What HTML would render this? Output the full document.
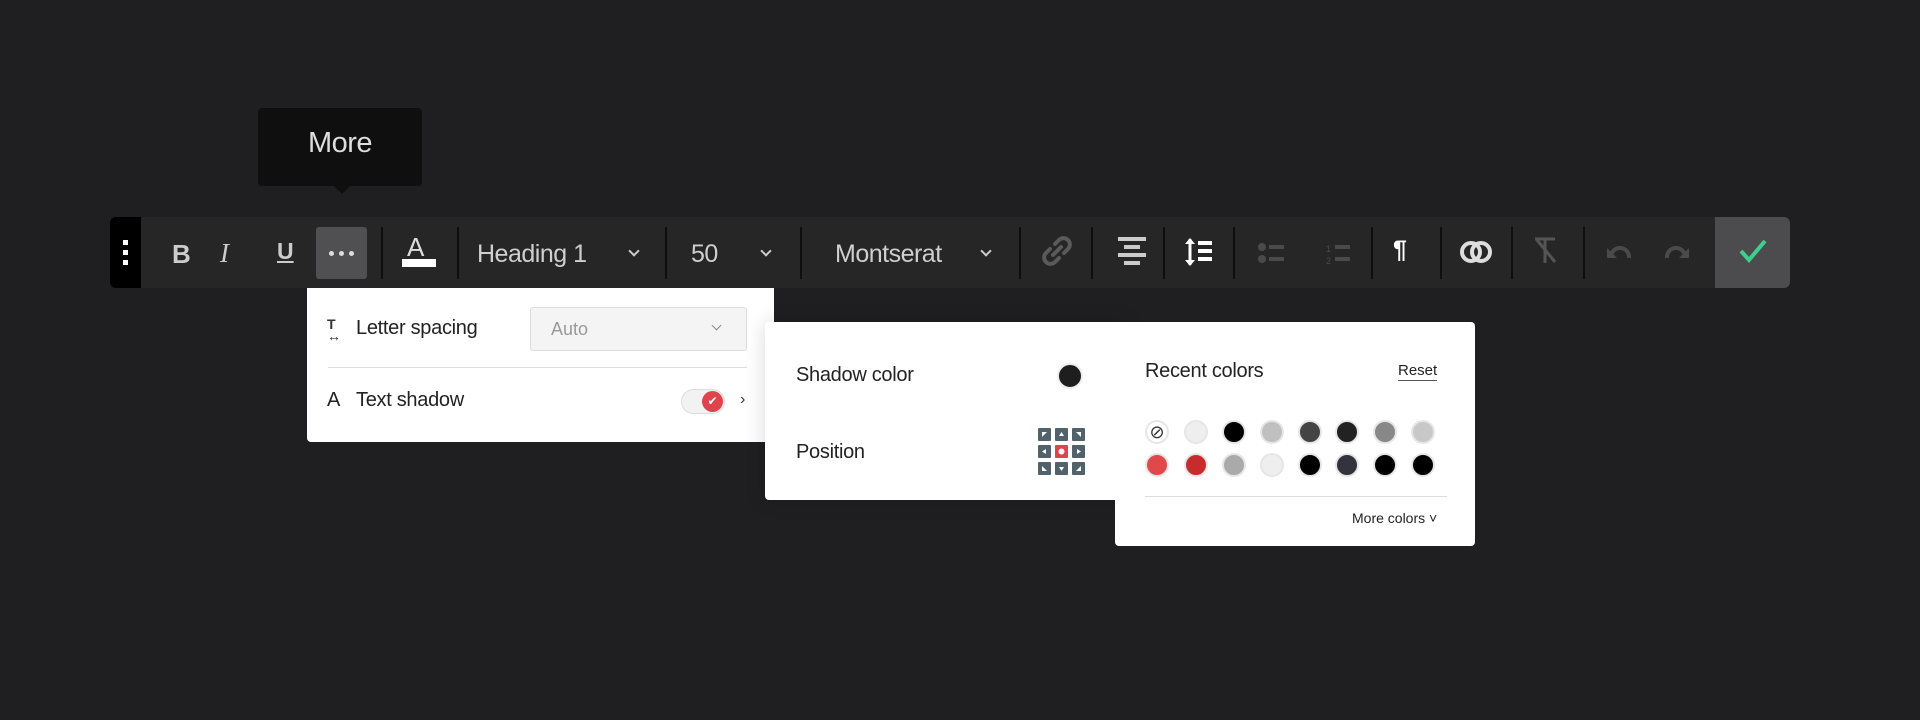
<!DOCTYPE html>
<html><head><meta charset="utf-8"><style>
*{box-sizing:border-box;margin:0;padding:0}
body{width:1920px;height:720px;background:#1f1f21;position:relative;overflow:hidden;font-family:"Liberation Sans",sans-serif}
.a{position:absolute}
.tb{left:110px;top:217px;width:1680px;height:71px;background:#262627;border-radius:6px}
.sep{position:absolute;top:227px;width:2px;height:52px;background:#0e0e0f}
.t{color:#cfcfcf;font-size:25px;letter-spacing:-0.5px}
.chev{position:absolute;width:8px;height:8px;border-right:2px solid #ccc;border-bottom:2px solid #ccc;transform:rotate(45deg)}
.panel{background:#fff;border-radius:4px}
.lbl{color:#222;font-size:20px;letter-spacing:-0.3px}
.sw{position:absolute;width:24px;height:24px;border-radius:50%;border:2px solid #e6e6e6}
</style></head><body>
<div class="a" style="left:258px;top:108px;width:164px;height:78px;background:#0f0f10;border-radius:4px"></div>
<div class="a" style="left:330px;top:182px;width:0;height:0;border-left:12px solid transparent;border-right:12px solid transparent;border-top:12px solid #0f0f10"></div>
<div class="a" style="left:258px;top:127px;width:164px;text-align:center;color:#ddd;font-size:29px;letter-spacing:-0.5px">More</div>
<div class="a tb"></div>
<div class="a" style="left:110px;top:217px;width:31px;height:71px;background:#000;border-radius:6px 0 0 6px"></div>
<div class="a" style="left:123px;top:240px;width:5px;height:5px;background:#fff;box-shadow:0 10px #fff,0 20px #fff"></div>
<div class="a" style="left:172px;top:239px;color:#ccc;font-size:26px;font-weight:bold">B</div>
<div class="a" style="left:220px;top:238px;color:#ccc;font-size:27px;font-style:italic;font-family:'Liberation Serif',serif">I</div>
<div class="a" style="left:277px;top:238px;color:#ccc;font-size:23px;font-weight:bold;text-decoration:underline">U</div>
<div class="a" style="left:316px;top:227px;width:51px;height:52px;background:#505053;border-radius:3px"></div>
<div class="a" style="left:329px;top:251px;width:5px;height:5px;border-radius:50%;background:#ddd;box-shadow:10px 0 #ddd,20px 0 #ddd"></div>
<div class="sep" style="left:381px"></div><div class="sep" style="left:457px"></div><div class="sep" style="left:665px"></div><div class="sep" style="left:800px"></div><div class="sep" style="left:1019px"></div><div class="sep" style="left:1091px"></div><div class="sep" style="left:1163px"></div><div class="sep" style="left:1233px"></div><div class="sep" style="left:1371px"></div><div class="sep" style="left:1440px"></div><div class="sep" style="left:1511px"></div><div class="sep" style="left:1583px"></div>
<div class="a" style="left:407px;top:232px;color:#ddd;font-size:26px">A</div>
<div class="a" style="left:402px;top:259px;width:34px;height:8px;background:#fff"></div>
<div class="a t" style="left:477px;top:240px">Heading 1</div><div class="chev" style="left:630px;top:247px"></div>
<div class="a t" style="left:691px;top:240px">50</div><div class="chev" style="left:762px;top:247px"></div>
<div class="a t" style="left:835px;top:240px">Montserat</div><div class="chev" style="left:982px;top:247px"></div>
<svg class="a" style="left:1040px;top:234px" width="34" height="34" viewBox="0 0 34 34" fill="none" stroke="#5a5a5a" stroke-width="4" stroke-linecap="round"><path d="M15 10l4-4a6 6 0 0 1 9 9l-4 4M19 24l-4 4a6 6 0 0 1-9-9l4-4M13 21l8-8"/></svg>
<svg class="a" style="left:1118px;top:237px" width="30" height="30" fill="#ccc"><rect x="0" y="0" width="28" height="4"/><rect x="6" y="8" width="16" height="4"/><rect x="0" y="16" width="28" height="4"/><rect x="6" y="24" width="16" height="4"/></svg>
<svg class="a" style="left:1185px;top:237px" width="30" height="32" fill="#fff" stroke="#fff"><path d="M5 2v26" stroke-width="3"/><path d="M0 7l5-6 5 6zM0 23l5 6 5-6z" stroke="none"/><rect x="13" y="4" width="14" height="4" stroke="none"/><rect x="13" y="12" width="14" height="4" stroke="none"/><rect x="13" y="20" width="14" height="4" stroke="none"/></svg>
<svg class="a" style="left:1258px;top:242px" width="30" height="24" fill="#4a4a4a"><circle cx="4" cy="5" r="4"/><circle cx="4" cy="17" r="4"/><rect x="11" y="3" width="15" height="4"/><rect x="11" y="15" width="15" height="4"/></svg>
<svg class="a" style="left:1325px;top:242px" width="30" height="24" fill="#4a4a4a"><text x="1" y="10" font-size="9" font-family="Liberation Sans">1</text><text x="1" y="22" font-size="9" font-family="Liberation Sans">2</text><rect x="10" y="3" width="15" height="4"/><rect x="10" y="15" width="15" height="4"/></svg>
<div class="a" style="left:1393px;top:236px;color:#fff;font-size:25px;font-weight:bold">¶</div>
<svg class="a" style="left:1460px;top:238px" width="34" height="28" fill="none" stroke="#ddd" stroke-width="4"><circle cx="11" cy="14" r="9"/><circle cx="21" cy="14" r="9"/></svg>
<svg class="a" style="left:1532px;top:236px" width="28" height="30" fill="none" stroke="#555" stroke-width="3"><path d="M3 3h20M13 3v24M5 4l18 22"/></svg>
<svg class="a" style="left:1606px;top:242px" width="28" height="20" fill="none" stroke="#4a4a4a" stroke-width="4"><path d="M5 14a9 9 0 0 1 18 2"/><path d="M1 6v10h10z" fill="#4a4a4a" stroke="none"/></svg>
<svg class="a" style="left:1662px;top:242px" width="28" height="20" fill="none" stroke="#4a4a4a" stroke-width="4"><path d="M23 14a9 9 0 0 0-18 2"/><path d="M27 6v10h-10z" fill="#4a4a4a" stroke="none"/></svg>
<div class="a" style="left:1715px;top:217px;width:75px;height:71px;background:#4c4c4e;border-radius:0 6px 6px 0"></div>
<svg class="a" style="left:1738px;top:238px" width="30" height="26" fill="none" stroke="#3ecf8e" stroke-width="4"><path d="M3 13l8 9L27 3"/></svg>
<div class="a panel" style="left:307px;top:288px;width:467px;height:154px;border-radius:0 0 4px 4px"></div>
<div class="a" style="left:327px;top:318px;font-size:14px;color:#333;font-weight:bold;line-height:12px">T<br>↔</div>
<div class="a lbl" style="left:356px;top:317px">Letter spacing</div>
<div class="a" style="left:530px;top:307px;width:217px;height:44px;background:#f4f4f4;border:1px solid #ddd;border-radius:3px"></div>
<div class="a" style="left:551px;top:319px;color:#999;font-size:18px">Auto</div>
<div class="chev" style="left:713px;top:322px;width:7px;height:7px;border-color:#888;border-width:1.5px"></div>
<div class="a" style="left:328px;top:367px;width:419px;height:1px;background:#ddd"></div>
<div class="a lbl" style="left:327px;top:389px">A</div>
<div class="a lbl" style="left:356px;top:389px">Text shadow</div>
<div class="a" style="left:681px;top:389px;width:44px;height:25px;border-radius:13px;background:#f2f2f2;border:1px solid #ddd"></div>
<div class="a" style="left:702px;top:391px;width:21px;height:21px;border-radius:50%;background:#e0434c;color:#fff;font-size:12px;text-align:center;line-height:21px">✔</div>
<div class="a" style="left:740px;top:391px;color:#333;font-size:16px">›</div>
<div class="a panel" style="left:765px;top:322px;width:360px;height:178px;box-shadow:0 0 20px rgba(0,0,0,.15)"></div>
<div class="a lbl" style="left:796px;top:364px">Shadow color</div>
<div class="a" style="left:1057px;top:363px;width:26px;height:26px;border-radius:50%;background:#1e1e1e;border:2px solid #eee"></div>
<div class="a lbl" style="left:796px;top:441px">Position</div>
<svg class="a" style="left:1038px;top:428px" width="50" height="50"><g fill="#52626b"><rect x="0" y="0" width="13" height="13" rx="1"/><rect x="17" y="0" width="13" height="13" rx="1"/><rect x="34" y="0" width="13" height="13" rx="1"/><rect x="0" y="17" width="13" height="13" rx="1"/><rect x="34" y="17" width="13" height="13" rx="1"/><rect x="0" y="34" width="13" height="13" rx="1"/><rect x="17" y="34" width="13" height="13" rx="1"/><rect x="34" y="34" width="13" height="13" rx="1"/></g><rect x="17" y="17" width="13" height="13" rx="1" fill="#e0434c"/><circle cx="23.5" cy="23.5" r="3" fill="#fff"/><g fill="#fff"><path d="M4 9V4h5z"/><path d="M21 8l2.5-4 2.5 4z"/><path d="M43 9V4h-5z"/><path d="M8 21l-4 2.5 4 2.5z"/><path d="M39 21l4 2.5-4 2.5z"/><path d="M4 38v5h5z"/><path d="M21 39l2.5 4 2.5-4z"/><path d="M43 38v5h-5z"/></g></svg>
<div class="a panel" style="left:1115px;top:322px;width:360px;height:224px"></div>
<div class="a" style="left:1145px;top:360px;color:#222;font-size:20px;letter-spacing:-0.3px">Recent colors</div>
<div class="a" style="left:1398px;top:362px;color:#222;font-size:15px;border-bottom:1.5px solid #555;padding-bottom:1px">Reset</div>
<div class="sw" style="left:1145px;top:420px;background:#fff;text-align:center;font-size:18px;line-height:20px;color:#333">⊘</div>
<div class="sw" style="left:1184px;top:420px;background:#eee"></div>
<div class="sw" style="left:1222px;top:420px;background:#000"></div>
<div class="sw" style="left:1260px;top:420px;background:#c0c0c0"></div>
<div class="sw" style="left:1298px;top:420px;background:#444"></div>
<div class="sw" style="left:1335px;top:420px;background:#222"></div>
<div class="sw" style="left:1373px;top:420px;background:#888"></div>
<div class="sw" style="left:1411px;top:420px;background:#c8c8c8"></div>
<div class="sw" style="left:1145px;top:453px;background:#e0484c"></div>
<div class="sw" style="left:1184px;top:453px;background:#c72c2c"></div>
<div class="sw" style="left:1222px;top:453px;background:#aaa"></div>
<div class="sw" style="left:1260px;top:453px;background:#eee"></div>
<div class="sw" style="left:1298px;top:453px;background:#000"></div>
<div class="sw" style="left:1335px;top:453px;background:#33333d"></div>
<div class="sw" style="left:1373px;top:453px;background:#000"></div>
<div class="sw" style="left:1411px;top:453px;background:#000"></div>
<div class="a" style="left:1145px;top:496px;width:302px;height:1px;background:#ddd"></div>
<div class="a" style="left:1352px;top:510px;color:#222;font-size:14px">More colors ˅</div>
</body></html>
